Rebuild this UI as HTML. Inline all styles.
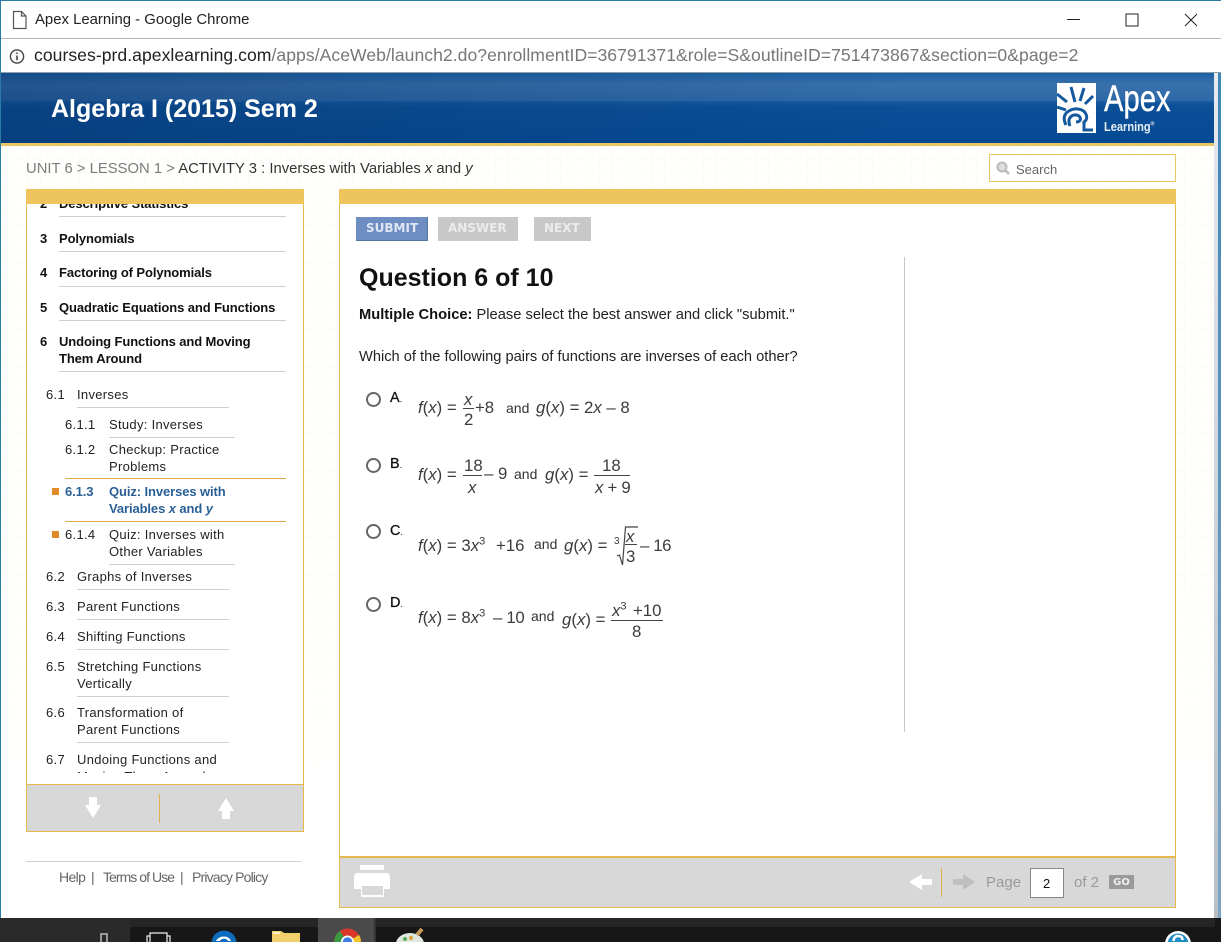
<!DOCTYPE html>
<html><head><meta charset="utf-8"><title>Apex Learning - Google Chrome</title>
<style>
html,body{margin:0;padding:0;width:1221px;height:942px;overflow:hidden;background:#fff}
body{position:relative;font-family:"Liberation Sans",sans-serif;color:#000}
.a{position:absolute}
.t{position:absolute;white-space:nowrap;line-height:1}
.s{position:absolute;white-space:nowrap;line-height:17px;font-size:13px;color:#222;letter-spacing:.3px}
.b{font-weight:bold;color:#111;letter-spacing:-.1px}
.l{position:absolute;height:1px;background:#cfcfcf}
.m{position:absolute;white-space:nowrap;line-height:1;font-size:16.8px;color:#3c3c3c}
.m i{font-style:italic}
.m sup{font-size:11px;line-height:0}
.fr{position:absolute;height:1px;background:#444}
.btn{position:absolute;white-space:nowrap;line-height:1;font-family:"DejaVu Sans",sans-serif;font-weight:bold;font-size:12px;top:222px}
.rad{position:absolute;left:366px;width:11px;height:11px;border:2px solid #666;border-radius:50%;background:#fff}
.lab{position:absolute;left:390px;white-space:nowrap;line-height:1;font-size:14.4px;color:#111;-webkit-text-stroke:.3px #111}
.lab span{font-size:9px;-webkit-text-stroke:0}
.and{position:absolute;white-space:nowrap;line-height:1;font-size:14px;color:#333}
.f{position:absolute;white-space:nowrap;line-height:1;font-size:14px;color:#666;letter-spacing:-.62px}
</style></head><body>
<div class="a" style="left:0;top:0;width:1221px;height:1px;background:#2a7ba6"></div>
<div class="a" style="left:0;top:0;width:1px;height:918px;background:#2a7ba6"></div>
<svg class="a" style="left:12px;top:10px" width="16" height="20" viewBox="0 0 16 20"><path d="M1.500 1.500H9.500L14 6V18.500H1.500Z M9.500 1.500V6H14" fill="none" stroke="#555" stroke-width="1.200"/></svg>
<div class="t" style="left:35px;top:13px;font-size:14.900px;color:#222">Apex Learning - Google Chrome</div>
<svg class="a" style="left:1060px;top:8px" width="145" height="24"><path d="M7 11.500H20M66 6H78V18H66ZM125 6L137 18M137 6L125 18" fill="none" stroke="#222" stroke-width="1"/></svg>
<div class="a" style="left:1px;top:38px;width:1220px;height:1px;background:#aeb6bc"></div>
<svg class="a" style="left:9px;top:48px" width="17" height="17"><circle cx="8" cy="8.500" r="6.600" fill="none" stroke="#444" stroke-width="1.400"/><path d="M8 7.500V12.200M8 4.500V6" stroke="#444" stroke-width="1.600"/></svg>
<div class="t" style="left:34px;top:47px;font-size:17.600px;color:#777;letter-spacing:.03px"><span style="color:#222">courses-prd.apexlearning.com</span>/apps/AceWeb/launch2.do?enrollmentID=36791371&amp;role=S&amp;outlineID=751473867&amp;section=0&amp;page=2</div>
<div class="a" style="left:1px;top:72px;width:1220px;height:1px;background:#8fa0aa"></div>

<!-- header -->
<div class="a" style="left:1px;top:73px;width:1213px;height:70px;background:linear-gradient(90deg,rgba(8,50,105,.45),rgba(0,0,0,0) 75%),linear-gradient(#1d61a5 0,#3a71ab 12px,#2c68a8 40%,#14589e 41%,#0a4f97 50%,#054a93 100%)"></div>
<div class="a" style="left:1px;top:143px;width:1213px;height:3px;background:#e9c766"></div>
<div class="t" style="left:51px;top:97px;font-size:25px;font-weight:bold;color:#fff">Algebra I (2015) Sem 2</div>
<svg class="a" style="left:1057px;top:83px" width="40" height="50" viewBox="0 0 40 50"><rect width="39" height="50" fill="#fff"/><path d="M0 11L10 19M0 24L9 27M14 4L18 19M27 5L23 18M36 13L28 21" stroke="#14589e" stroke-width="3" fill="none"/><path d="M9 42C3 30 14 25 21 26C30 27 32 36 27 39V47H36" fill="none" stroke="#14589e" stroke-width="3"/><path d="M13 43C9 33 18 30 22 33C25 36 23 39 19 39" fill="none" stroke="#14589e" stroke-width="3"/></svg>
<div class="t" style="left:1104px;top:80px;font-size:37px;color:#fff;transform:scaleX(.79);transform-origin:0 0;-webkit-text-stroke:.4px #fff">Apex</div>
<div class="t" style="left:1104px;top:120px;font-size:13px;font-weight:bold;color:#e8eef6;transform:scaleX(.85);transform-origin:0 0">Learning<sup style="font-size:6px">®</sup></div>

<!-- background -->
<div class="a" style="left:1px;top:146px;width:1213px;height:772px;background-color:#fffffd;background-image:linear-gradient(#fefbf2 1px,transparent 1px),linear-gradient(90deg,#fefbf2 1px,transparent 1px);background-size:13px 13px"></div>
<div class="a" style="left:1px;top:560px;width:1213px;height:358px;background:linear-gradient(rgba(255,255,255,0),#fff 75%)"></div>
<div class="a" style="left:1214px;top:73px;width:7px;height:845px;background:linear-gradient(#e6eaf0,#b8bfc5)"></div>
<div class="a" style="left:1218px;top:73px;width:3px;height:845px;background:linear-gradient(#3f86b8,#7fa5c2)"></div>

<div class="t" style="left:26px;top:162px;font-size:14.830px;color:#7c7c7c">UNIT 6 &gt; LESSON 1 &gt; <span style="color:#333">ACTIVITY 3 : Inverses with Variables <i>x</i> and <i>y</i></span></div>
<div class="a" style="left:989px;top:154px;width:185px;height:26px;border:1px solid #e6c765;background:#fff"></div>
<svg class="a" style="left:995px;top:160px" width="17" height="16"><circle cx="7" cy="7" r="4.500" fill="#ddd" stroke="#bbb" stroke-width="2"/><path d="M10.500 10.500L14 14" stroke="#bbb" stroke-width="2.500"/></svg>
<div class="t" style="left:1016px;top:163px;font-size:13px;color:#666">Search</div>

<!-- left panel -->
<div class="a" style="left:26px;top:189px;width:276px;height:641px;border:1px solid #e6b94f;background:#fff"></div>
<div class="a" style="left:27px;top:204px;width:276px;height:569px;overflow:hidden">
<div style="position:absolute;left:-27px;top:-204px;width:303px;height:773px">
<div class="s b" style="left:40px;top:195px">2</div><div class="s b" style="left:59px;top:195px">Descriptive Statistics</div>
<div class="l" style="left:59px;top:216px;width:227px"></div>
<div class="s b" style="left:40px;top:230px">3</div><div class="s b" style="left:59px;top:230px">Polynomials</div>
<div class="l" style="left:59px;top:251px;width:227px"></div>
<div class="s b" style="left:40px;top:264px">4</div><div class="s b" style="left:59px;top:264px">Factoring of Polynomials</div>
<div class="l" style="left:59px;top:286px;width:227px"></div>
<div class="s b" style="left:40px;top:299px">5</div><div class="s b" style="left:59px;top:299px">Quadratic Equations and Functions</div>
<div class="l" style="left:59px;top:320px;width:227px"></div>
<div class="s b" style="left:40px;top:333px">6</div><div class="s b" style="left:59px;top:333px">Undoing Functions and Moving<br>Them Around</div>
<div class="l" style="left:59px;top:371px;width:227px"></div>

<div class="s" style="left:46px;top:386px">6.1</div><div class="s" style="left:77px;top:386px">Inverses</div>
<div class="l" style="left:77px;top:407px;width:152px"></div>
<div class="s" style="left:65px;top:416px">6.1.1</div><div class="s" style="left:109px;top:416px">Study: Inverses</div>
<div class="l" style="left:109px;top:437px;width:126px"></div>
<div class="s" style="left:65px;top:441px">6.1.2</div><div class="s" style="left:109px;top:441px">Checkup: Practice<br>Problems</div>
<div class="a" style="left:65px;top:478px;width:221px;height:1px;background:#dfa94a"></div>
<div class="a" style="left:52px;top:488px;width:7px;height:7px;background:#e08a2a"></div>
<div class="s b" style="left:65px;top:483px;color:#2a5f96">6.1.3</div><div class="s b" style="left:109px;top:483px;color:#2a5f96">Quiz: Inverses with<br>Variables <i>x</i> and <i>y</i></div>
<div class="a" style="left:65px;top:521px;width:221px;height:1px;background:#dfa94a"></div>
<div class="a" style="left:52px;top:531px;width:7px;height:7px;background:#e08a2a"></div>
<div class="s" style="left:65px;top:526px">6.1.4</div><div class="s" style="left:109px;top:526px">Quiz: Inverses with<br>Other Variables</div>
<div class="l" style="left:109px;top:564px;width:126px"></div>
<div class="s" style="left:46px;top:568px">6.2</div><div class="s" style="left:77px;top:568px">Graphs of Inverses</div>
<div class="l" style="left:77px;top:589px;width:152px"></div>
<div class="s" style="left:46px;top:598px">6.3</div><div class="s" style="left:77px;top:598px">Parent Functions</div>
<div class="l" style="left:77px;top:619px;width:152px"></div>
<div class="s" style="left:46px;top:628px">6.4</div><div class="s" style="left:77px;top:628px">Shifting Functions</div>
<div class="l" style="left:77px;top:649px;width:152px"></div>
<div class="s" style="left:46px;top:658px">6.5</div><div class="s" style="left:77px;top:658px">Stretching Functions<br>Vertically</div>
<div class="l" style="left:77px;top:696px;width:152px"></div>
<div class="s" style="left:46px;top:704px">6.6</div><div class="s" style="left:77px;top:704px">Transformation of<br>Parent Functions</div>
<div class="l" style="left:77px;top:742px;width:152px"></div>
<div class="s" style="left:46px;top:751px">6.7</div><div class="s" style="left:77px;top:751px">Undoing Functions and</div>
<div class="s" style="left:77px;top:768px">Moving Them Around</div>
</div></div>
<div class="a" style="left:26px;top:189px;width:278px;height:15px;background:#eec55c"></div>
<div class="a" style="left:27px;top:784px;width:276px;height:47px;background:#d8d8d8;border-top:1px solid #e6b94f;box-sizing:border-box"></div>
<div class="a" style="left:159px;top:794px;width:1px;height:29px;background:#e0b050"></div>
<svg class="a" style="left:84px;top:796px" width="18" height="24"><path d="M5 1H13V9H17L9 22L1 9H5Z" fill="#fff"/></svg>
<svg class="a" style="left:217px;top:796px" width="18" height="24"><path d="M5 23H13V15H17L9 2L1 15H5Z" fill="#fff"/></svg>
<div class="a" style="left:26px;top:861px;width:275px;height:1px;background:#cfcfcf"></div>
<div class="f" style="left:59px;top:870px">Help</div><div class="f" style="left:91px;top:870px">|</div>
<div class="f" style="left:103px;top:870px;letter-spacing:-.95px">Terms of Use</div><div class="f" style="left:180px;top:870px">|</div>
<div class="f" style="left:192px;top:870px;letter-spacing:-.83px">Privacy Policy</div>

<!-- main panel -->
<div class="a" style="left:339px;top:189px;width:835px;height:717px;border:1px solid #e6b94f;background:#fff"></div>
<div class="a" style="left:339px;top:189px;width:837px;height:15px;background:#eec55c"></div>
<div class="a" style="left:356px;top:217px;width:72px;height:24px;background:#6d8dc3;box-shadow:inset 0 -1px #56749f,inset -1px 0 #56749f"></div>
<div class="btn" style="left:366px;color:#dfe7f3">SUBMIT</div>
<div class="a" style="left:438px;top:217px;width:80px;height:24px;background:#c8c8c8"></div>
<div class="btn" style="left:448px;color:#ececec">ANSWER</div>
<div class="a" style="left:534px;top:217px;width:57px;height:24px;background:#c8c8c8"></div>
<div class="btn" style="left:544px;color:#ececec">NEXT</div>

<div class="t" style="left:359px;top:266px;font-size:25px;font-weight:bold;color:#111">Question 6 of 10</div>
<div class="t" style="left:359px;top:308px;font-size:14.700px;color:#222"><b style="color:#111">Multiple Choice:</b> Please select the best answer and click "submit."</div>
<div class="t" style="left:359px;top:350px;font-size:14.650px;color:#222">Which of the following pairs of functions are inverses of each other?</div>
<div class="a" style="left:904px;top:257px;width:1px;height:475px;background:#c9c9c9"></div>

<!-- radio + labels -->
<div class="rad" style="top:392px"></div><div class="lab" style="top:391px">A<span>.</span></div>
<div class="rad" style="top:458px"></div><div class="lab" style="top:457px">B<span>.</span></div>
<div class="rad" style="top:524px"></div><div class="lab" style="top:524px">C<span>.</span></div>
<div class="rad" style="top:597px"></div><div class="lab" style="top:596px">D<span>.</span></div>

<!-- A -->
<div class="m" style="left:418px;top:400px"><i>f</i>(<i>x</i>) =</div>
<div class="m" style="left:464px;top:392px"><i>x</i></div>
<div class="fr" style="left:463px;top:408px;width:11px"></div>
<div class="m" style="left:464px;top:412px">2</div>
<div class="m" style="left:475px;top:400px">+8</div>
<div class="and" style="left:506px;top:401px">and</div>
<div class="m" style="left:536px;top:400px"><i>g</i>(<i>x</i>) = 2<i>x</i> – 8</div>
<!-- B -->
<div class="m" style="left:418px;top:467px"><i>f</i>(<i>x</i>) =</div>
<div class="m" style="left:464px;top:458px">18</div>
<div class="fr" style="left:463px;top:475px;width:19px"></div>
<div class="m" style="left:468px;top:480px"><i>x</i></div>
<div class="m" style="left:484px;top:466px">– 9</div>
<div class="and" style="left:514px;top:467px">and</div>
<div class="m" style="left:545px;top:467px"><i>g</i>(<i>x</i>) =</div>
<div class="m" style="left:602px;top:458px">18</div>
<div class="fr" style="left:594px;top:475px;width:36px"></div>
<div class="m" style="left:595px;top:480px;letter-spacing:-.3px"><i>x</i> + 9</div>
<!-- C -->
<div class="m" style="left:418px;top:538px"><i>f</i>(<i>x</i>) = 3<i>x</i><sup>3</sup></div>
<div class="m" style="left:496px;top:538px">+16</div>
<div class="and" style="left:534px;top:537px">and</div>
<div class="m" style="left:564px;top:538px"><i>g</i>(<i>x</i>) =</div>
<div class="t" style="left:614px;top:537px;font-size:10px;color:#3c3c3c">3</div>
<svg class="a" style="left:613px;top:525px" width="28" height="42"><path d="M4 31L6.500 30L9.500 40L12.500 2H25" fill="none" stroke="#444" stroke-width="1.200"/></svg>
<div class="m" style="left:626px;top:529px"><i>x</i></div>
<div class="fr" style="left:625px;top:544px;width:12px"></div>
<div class="m" style="left:626px;top:549px">3</div>
<div class="m" style="left:640px;top:538px;letter-spacing:-.4px">– 16</div>
<!-- D -->
<div class="m" style="left:418px;top:610px"><i>f</i>(<i>x</i>) = 8<i>x</i><sup>3</sup></div>
<div class="m" style="left:493px;top:610px;letter-spacing:-.3px">– 10</div>
<div class="and" style="left:531px;top:609px">and</div>
<div class="m" style="left:562px;top:612px"><i>g</i>(<i>x</i>) =</div>
<div class="m" style="left:612px;top:603px"><i>x</i><sup>3</sup></div>
<div class="m" style="left:633px;top:603px">+10</div>
<div class="fr" style="left:611px;top:620px;width:52px"></div>
<div class="m" style="left:632px;top:624px">8</div>

<!-- bottom bar -->
<div class="a" style="left:340px;top:856px;width:835px;height:51px;background:#d8d8d8"></div>
<div class="a" style="left:339px;top:856px;width:837px;height:52px;box-sizing:border-box;border:1px solid #e6b94f;border-top-width:2px"></div>
<svg class="a" style="left:354px;top:865px" width="37" height="33"><path d="M6 0H30V5H6ZM4 8H32Q36 8 36 12V24H30V32H7V24H0V12Q0 8 4 8Z" fill="#fff"/><rect x="8" y="21" width="21" height="9" fill="#d8d8d8"/></svg>
<svg class="a" style="left:908px;top:872px" width="26" height="20"><path d="M1 10L14 2V7H24V13H14V18Z" fill="#fff"/></svg>
<div class="a" style="left:941px;top:868px;width:1px;height:29px;background:#e0b050"></div>
<svg class="a" style="left:951px;top:872px" width="26" height="20"><path d="M24 10L12 2V7H2V13H12V18Z" fill="#bfbfbf"/></svg>
<div class="t" style="left:986px;top:875px;font-size:15px;color:#999">Page</div>
<div class="a" style="left:1030px;top:868px;width:32px;height:28px;border:1px solid #888;background:#fff"></div>
<div class="t" style="left:1043px;top:877px;font-size:13px;color:#111">2</div>
<div class="t" style="left:1074px;top:875px;font-size:15px;color:#999">of 2</div>
<div class="a" style="left:1109px;top:875px;width:25px;height:14px;background:#9a9a9a"></div>
<div class="t" style="left:1109px;top:878px;width:25px;text-align:center;font-size:10px;font-weight:bold;color:#eee;font-family:'DejaVu Sans',sans-serif">GO</div>

<!-- taskbar -->
<div class="a" style="left:0;top:918px;width:1221px;height:24px;background:#171717"></div>
<div class="a" style="left:0;top:918px;width:1215px;height:9px;background:#262626"></div>
<div class="a" style="left:0;top:918px;width:130px;height:24px;background:#2a2a2a"></div>
<div class="a" style="left:318px;top:918px;width:56px;height:24px;background:#4a4a4a"></div>
<div class="a" style="left:374px;top:918px;width:2px;height:24px;background:#333"></div>
<div class="a" style="left:100px;top:933px;width:8px;height:9px;border:2px solid #999;border-bottom:0;box-sizing:border-box"></div>
<svg class="a" style="left:146px;top:932px" width="28" height="10"><path d="M1 10V4H4V1H21V4H24V10M4 4V10M21 4V10" fill="none" stroke="#eee" stroke-width="1.200"/></svg>
<svg class="a" style="left:211px;top:930px" width="26" height="12"><circle cx="13" cy="13" r="12.500" fill="#0f6cbd"/><path d="M5 11C8 5 18 5 20 11Z" fill="#fff"/><path d="M9 11C10 8 16 8 17 11Z" fill="#0f6cbd"/></svg>
<svg class="a" style="left:272px;top:930px" width="28" height="12"><path d="M0 12V1H9L12 3H28V12Z" fill="#f2cf6b"/><path d="M1 2H8V4H1Z" fill="#fff3c0"/></svg>
<svg class="a" style="left:333px;top:928px" width="30" height="14"><circle cx="14.500" cy="14" r="13.500" fill="#d9372b"/><path d="M1 14A13.500 13.500 0 0 1 7 3L14 14Z" fill="#3b9b45"/><path d="M28 14A13.500 13.500 0 0 0 26 7L14 14Z" fill="#f3c22c"/><circle cx="14.500" cy="14" r="6.500" fill="#fff"/><circle cx="14.500" cy="14" r="4.800" fill="#3f7ee0"/></svg>
<svg class="a" style="left:394px;top:928px" width="32" height="14"><ellipse cx="16" cy="16" rx="14" ry="11" fill="#dfe8de"/><circle cx="11" cy="11" r="2" fill="#59a85a"/><circle cx="17" cy="10" r="2" fill="#d8a23a"/><path d="M23 7L28 1" stroke="#c89a5a" stroke-width="4"/></svg>
<svg class="a" style="left:1165px;top:930px" width="28" height="12"><circle cx="13" cy="14" r="13" fill="#fff"/><circle cx="13" cy="14" r="10.500" fill="#1f8dc2"/><path d="M8.500 11Q9 6 13 6Q17.500 6 17.500 10" fill="none" stroke="#fff" stroke-width="2.500"/></svg>
</body></html>
